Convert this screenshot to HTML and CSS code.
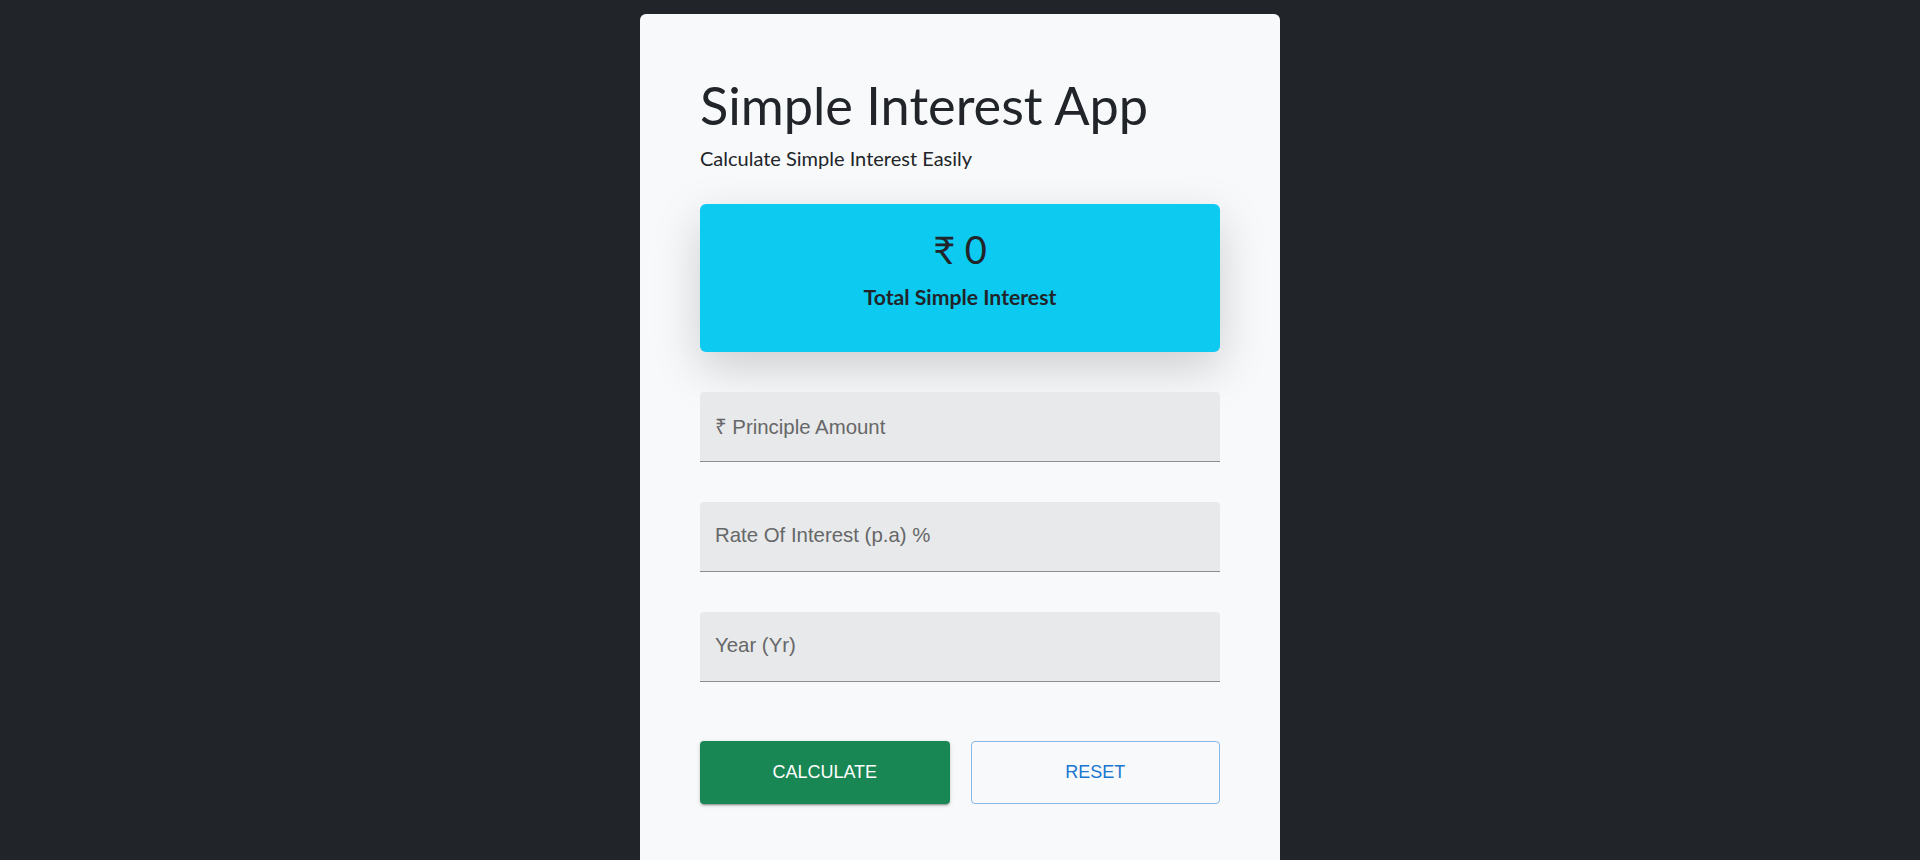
FILE: index.html
```html
<!DOCTYPE html>
<html lang="en">
<head>
<meta charset="utf-8">
<title>Simple Interest App</title>
<link rel="stylesheet" href="styles.css">
</head>
<body>
  <main class="card">
    <h1 class="title">Simple Interest App</h1>
    <p class="subtitle">Calculate Simple Interest Easily</p>

    <section class="result">
      <div class="result-amount">₹ 0</div>
      <div class="result-label">Total Simple Interest</div>
    </section>

    <form class="fields">
      <label class="field"><span class="field-label">₹ Principle Amount</span></label>
      <label class="field"><span class="field-label">Rate Of Interest (p.a) %</span></label>
      <label class="field"><span class="field-label">Year (Yr)</span></label>

      <div class="actions">
        <button type="button" class="btn btn-calc">CALCULATE</button>
        <button type="button" class="btn btn-reset">RESET</button>
      </div>
    </form>
  </main>
</body>
</html>
```

FILE: styles.css
```css
* { box-sizing: border-box; }

html, body {
  margin: 0;
  padding: 0;
}

body {
  background: #212529;
  height: 100vh;
  overflow: hidden;
  font-family: Lato, "Noto Sans", "DejaVu Sans", sans-serif;
  color: #212529;
  display: flex;
  justify-content: center;
  align-items: flex-start;
}

.card {
  margin-top: 14px;
  width: 640px;
  background: #f8f9fa;
  border-radius: 6px;
  padding: 59px 60px 80px;
  display: flex;
  flex-direction: column;
}

.title {
  margin: 0;
  font-size: 52.3px;
  line-height: 64px;
  font-weight: 400;
  color: #212529;
}

.subtitle {
  margin: 8px 0 0;
  font-size: 20px;
  line-height: 27px;
  color: #212529;
}

.result {
  margin-top: 32px;
  height: 148px;
  background: #0dcaf0;
  border-radius: 6px;
  box-shadow: 0 16px 48px rgba(0, 0, 0, 0.175);
  padding-top: 22px;
  display: flex;
  flex-direction: column;
  align-items: center;
}

.result-amount {
  font-size: 38px;
  line-height: 46px;
  color: #212529;
}

.result-label {
  margin-top: 13px;
  font-size: 21.2px;
  line-height: 25px;
  font-weight: 700;
  color: #212529;
}

.fields {
  margin: 40px 0 0;
  display: flex;
  flex-direction: column;
  gap: 40px;
}

.field {
  height: 70px;
  background: #e8e9ea;
  border-radius: 4px 4px 0 0;
  border-bottom: 1px solid #8c8d8e;
  padding-left: 15px;
  padding-bottom: 2px;
  display: flex;
  align-items: center;
}

.field-label {
  font-family: "Liberation Sans", Arial, "Noto Sans", sans-serif;
  font-size: 20.4px;
  color: #666768;
}

.actions {
  margin-top: 19px;
  display: grid;
  grid-template-columns: 1fr 1fr;
  gap: 21px;
}

.btn {
  height: 63px;
  font-family: "Liberation Sans", Arial, sans-serif;
  font-size: 18px;
  border-radius: 4px;
  cursor: pointer;
  padding: 0;
}

.btn-calc {
  background: #198754;
  color: #ffffff;
  border: none;
  box-shadow: 0 3px 1px -2px rgba(0, 0, 0, 0.2), 0 2px 2px 0 rgba(0, 0, 0, 0.14), 0 1px 5px 0 rgba(0, 0, 0, 0.12);
}

.btn-reset {
  background: transparent;
  color: #1976d2;
  border: 1px solid rgba(25, 118, 210, 0.5);
}
```
